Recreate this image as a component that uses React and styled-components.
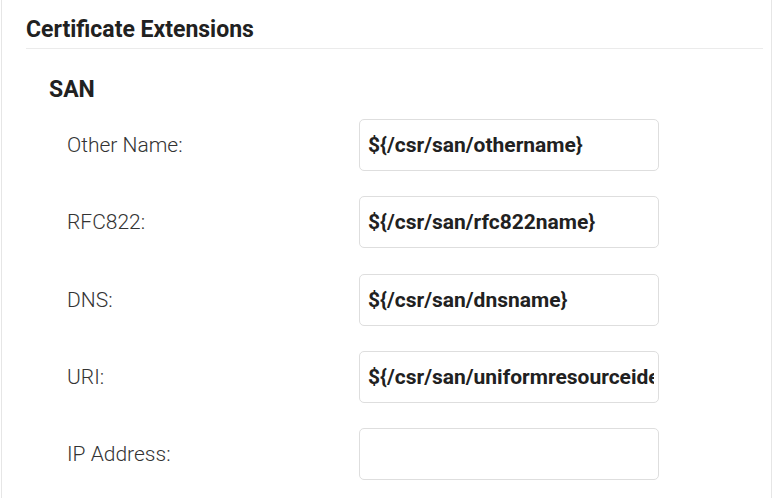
import React from "react";
import styled, { createGlobalStyle } from "styled-components";

const Global = createGlobalStyle`
  html, body { margin: 0; padding: 0; background: #fff; }
  body { font-family: Roboto, "Liberation Sans", Arial, sans-serif; overflow: hidden; }
`;

const Card = styled.div`
  margin-left: 1px;
  width: 771px;
  height: 498px;
  border-left: 1px solid #e6e6e6;
  border-right: 1px solid #e6e6e6;
  padding: 0 8px 0 24px;
  box-sizing: border-box;
`;

const Header = styled.h2`
  margin: 0;
  padding-top: 16px;
  height: 49px;
  box-sizing: border-box;
  font-size: 23px;
  font-weight: 700;
  line-height: 28px;
  color: #212121;
  border-bottom: 1px solid #ebebeb;
`;

const Section = styled.div`
  padding-left: 23px;
`;

const SectionTitle = styled.h3`
  margin: 0;
  padding-top: 27px;
  font-size: 23px;
  font-weight: 700;
  line-height: 28px;
  color: #212121;
`;

const Rows = styled.div`
  display: flex;
  flex-direction: column;
  gap: 25.25px;
  margin-top: 15px;
  padding-left: 18px;
`;

const Row = styled.div`
  display: grid;
  grid-template-columns: 292px 300px;
  align-items: center;
`;

const Label = styled.label`
  font-size: 21px;
  font-weight: 300;
  color: #333;
`;

const Input = styled.input`
  width: 300px;
  height: 52px;
  box-sizing: border-box;
  border: 1px solid #dedede;
  border-radius: 5px;
  padding: 0 4px 0 8px;
  font-family: Roboto, "Liberation Sans", Arial, sans-serif;
  font-size: 21px;
  font-weight: 700;
  color: #212121;
  background: #fff;
  outline: none;
`;

const fields = [
  ["Other Name:", "${/csr/san/othername}"],
  ["RFC822:", "${/csr/san/rfc822name}"],
  ["DNS:", "${/csr/san/dnsname}"],
  ["URI:", "${/csr/san/uniformresourceidentifier}"],
  ["IP Address:", ""],
];

export default function App() {
  return (
    <>
      <Global />
      <Card>
        <Header>Certificate Extensions</Header>
        <Section>
          <SectionTitle>SAN</SectionTitle>
          <Rows>
            {fields.map(([label, value]) => (
              <Row key={label}>
                <Label>{label}</Label>
                <Input defaultValue={value} readOnly />
              </Row>
            ))}
          </Rows>
        </Section>
      </Card>
    </>
  );
}
